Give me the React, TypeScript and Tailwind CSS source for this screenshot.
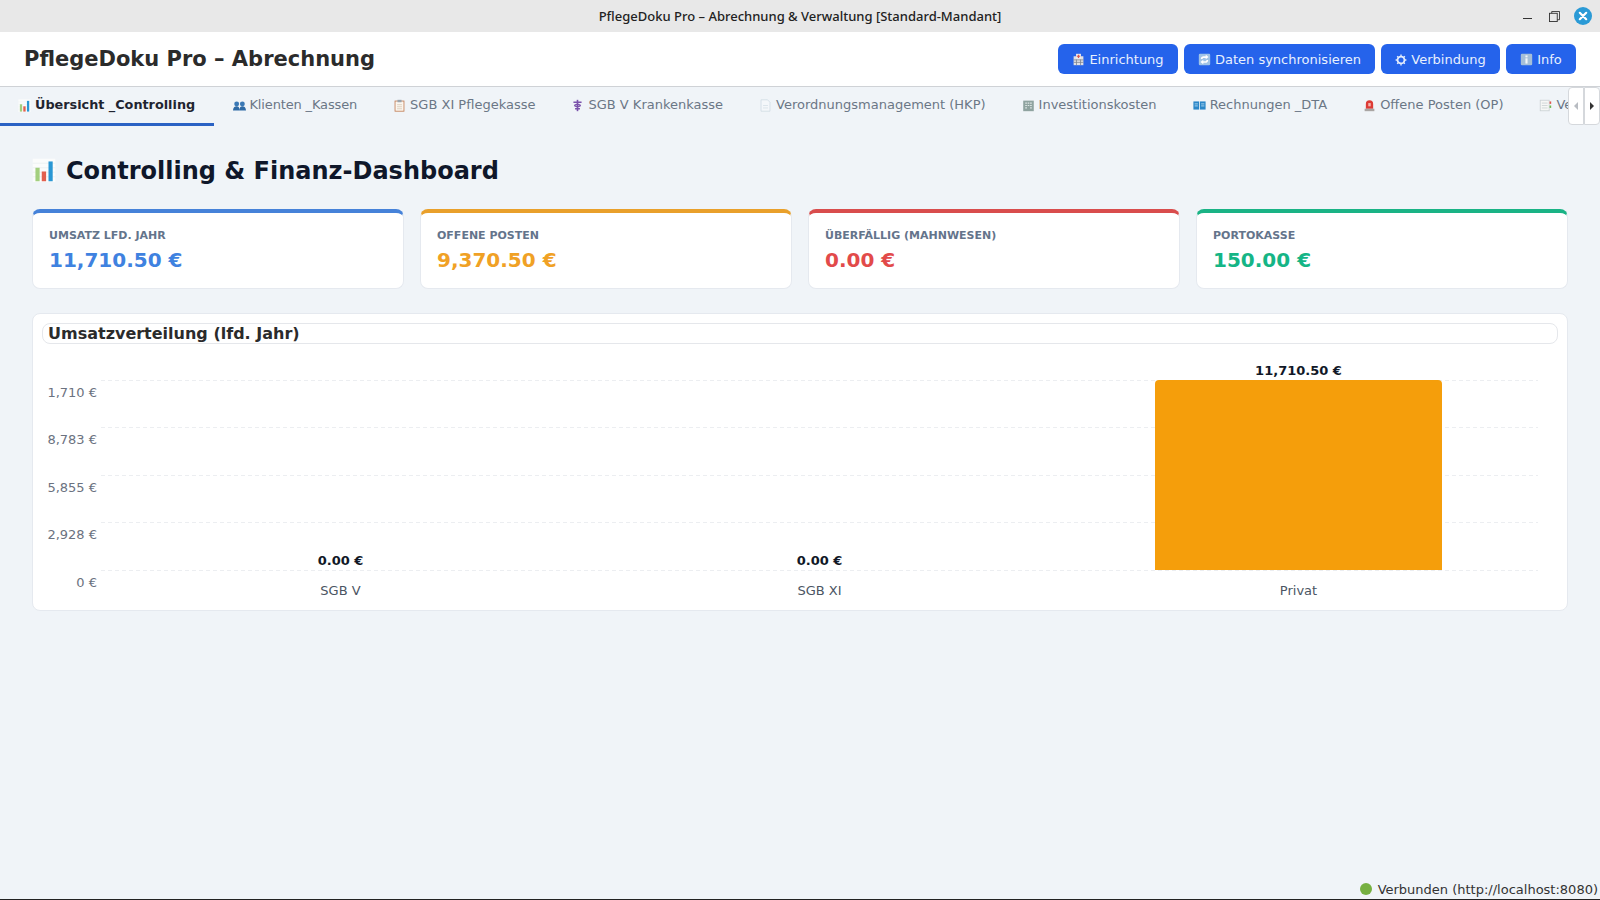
import React from 'react';

const sans = 'font-["DejaVu_Sans",sans-serif]';

function BarsIcon({ className }: { className?: string }) {
  return (
    <svg viewBox="0 0 16 16" className={className}>
      <rect x="0.5" y="0.5" width="15" height="15.500" fill="#fbfcfc" />
      <path d="M0.500 3.500h15M0.500 6.500h15M0.500 9.500h15M0.500 12.500h15" stroke="#e9edef" strokeWidth="0.500" />
      <rect x="2.300" y="6.500" width="2.800" height="9" fill="#a3cf7f" />
      <rect x="6.500" y="9" width="2.900" height="6.500" fill="#e2604f" />
      <rect x="11" y="2.300" width="2.800" height="13.200" fill="#2a97d4" />
    </svg>
  );
}

function PeopleIcon() {
  return (
    <svg viewBox="0 0 16 16" className="w-[13px] h-[13px]">
      <circle cx="4.500" cy="6" r="3" fill="#3a78b5" />
      <circle cx="11.500" cy="6" r="3" fill="#3a78b5" />
      <path d="M0 14c0-3 2-5 4.500-5S8 11 8 14zM8 14c0-3 1-5 3.500-5S16 11 16 14z" fill="#2f6aa5" />
    </svg>
  );
}

function ClipboardIcon() {
  return (
    <svg viewBox="0 0 16 16" className="w-[13px] h-[13px]">
      <rect x="2.500" y="2.500" width="11" height="12.500" fill="#fbf6ef" stroke="#c07a50" />
      <rect x="5.500" y="1" width="5" height="3" fill="#9aa5ae" />
      <path d="M5 7h6M5 9.500h6M5 12h6" stroke="#d8c9b8" />
    </svg>
  );
}

function StaffIcon() {
  return (
    <svg viewBox="0 0 16 16" className="w-[13px] h-[13px]">
      <path d="M8 1v14" stroke="#7b52ab" strokeWidth="2" />
      <path d="M3 4h10M4 8c3-2 5-2 8 0M4 8c3 2 5 2 8 0M5 12h6" stroke="#7b52ab" strokeWidth="1.600" fill="none" />
    </svg>
  );
}

function DocIcon() {
  return (
    <svg viewBox="0 0 16 16" className="w-[13px] h-[13px]">
      <path d="M2.500 1h8l3 3v11h-11z" fill="#f4f7fa" stroke="#cfdbe4" />
      <path d="M5 8h6M5 11h6" stroke="#d5e0e8" />
    </svg>
  );
}

function OfficeIcon() {
  return (
    <svg viewBox="0 0 16 16" className="w-[13px] h-[13px]">
      <rect x="1.500" y="2" width="13" height="13" fill="#8fa3a0" />
      <path d="M4 5h2M7 5h2M10 5h2M4 8h2M7 8h2M10 8h2M4 11h2M10 11h2" stroke="#dfe7e6" strokeWidth="1.400" />
    </svg>
  );
}

function BookIcon() {
  return (
    <svg viewBox="0 0 16 16" className="w-[13px] h-[13px]">
      <rect x="0.500" y="3" width="7" height="10" fill="#2a86c8" />
      <rect x="8.500" y="3" width="7" height="10" fill="#2a86c8" />
      <path d="M2 6h4M2 8.500h4M10 6h4M10 8.500h4" stroke="#bfe0f4" />
    </svg>
  );
}

function SirenIcon() {
  return (
    <svg viewBox="0 0 16 16" className="w-[13px] h-[13px]">
      <path d="M3.500 12V6a4.500 4.500 0 0 1 9 0v6z" fill="#dd3b36" />
      <rect x="6.500" y="5" width="3" height="4" fill="#f7b5ae" />
      <rect x="2" y="12" width="12" height="3" fill="#a9a5a3" />
    </svg>
  );
}

function LedgerIcon() {
  return (
    <svg viewBox="0 0 16 16" className="w-[13px] h-[13px]">
      <rect x="1.500" y="1.500" width="11" height="13" fill="#f6f7f5" stroke="#c9d0d3" />
      <path d="M3.500 5h7M3.500 8h7M3.500 11h7" stroke="#c9d0d3" />
      <rect x="13" y="3" width="2" height="3" fill="#e0574c" />
      <rect x="13" y="8" width="2" height="3" fill="#6fb74f" />
    </svg>
  );
}

function HospitalIcon() {
  return (
    <svg viewBox="0 0 16 16" className="w-[13px] h-[13px] shrink-0">
      <rect x="2" y="4" width="12" height="11" fill="#dfe0e6" />
      <rect x="5" y="1" width="6" height="6" fill="#eeeaea" />
      <path d="M7.200 2h1.600v1.300h1.300v1.400H8.800V6H7.200V4.700H5.900V3.300h1.300z" fill="#d7564e" />
      <path d="M2 8.500h12M2 11.500h12M5.500 8v7M10.500 8v7" stroke="#7f8590" />
    </svg>
  );
}

function SyncIcon() {
  return (
    <svg viewBox="0 0 16 16" className="w-[13px] h-[13px] shrink-0">
      <rect x="1" y="1" width="14" height="14" rx="1.500" fill="#9fc3e6" />
      <path d="M3.500 7.500c0-2.300 1.200-3.500 3.500-3.500h2.500V2.300L13 5l-3.500 2.700V6H7c-.9 0-1.400.5-1.400 1.500zM12.500 8.500c0 2.300-1.200 3.500-3.500 3.500H6.500v1.700L3 11l3.500-2.700V10H9c.9 0 1.400-.5 1.400-1.500z" fill="#fff" />
    </svg>
  );
}

function GearIcon() {
  return (
    <svg viewBox="0 0 16 16" className="w-[12px] h-[12px] shrink-0">
      <circle cx="8" cy="8" r="4.600" fill="none" stroke="#e3ecfc" strokeWidth="2.400" />
      <path d="M8 .8v2.400M8 12.800v2.400M.8 8h2.400M12.800 8h2.400M2.900 2.900l1.700 1.700M11.400 11.400l1.700 1.700M2.900 13.100l1.700-1.700M11.400 4.600l1.700-1.700" stroke="#e3ecfc" strokeWidth="1.800" />
    </svg>
  );
}

function InfoIcon() {
  return (
    <svg viewBox="0 0 16 16" className="w-[13px] h-[13px] shrink-0">
      <rect x="1" y="1" width="14" height="14" rx="1.500" fill="#a5bfd8" />
      <rect x="6.700" y="3" width="2.600" height="2.400" fill="#f2f6fa" />
      <rect x="6.700" y="6.500" width="2.600" height="6.500" fill="#f2f6fa" />
    </svg>
  );
}

const buttons = [
  { label: 'Einrichtung', icon: <HospitalIcon />, width: 'w-[120px]' },
  { label: 'Daten synchronisieren', icon: <SyncIcon />, width: 'w-[191px]' },
  { label: 'Verbindung', icon: <GearIcon />, width: 'w-[119px]' },
  { label: 'Info', icon: <InfoIcon />, width: 'w-[70px]' },
];

const tabs = [
  { label: 'Klienten _Kassen', icon: <PeopleIcon />, tracking: 'tracking-[-0.15px]' },
  { label: 'SGB XI Pflegekasse', icon: <ClipboardIcon />, tracking: '' },
  { label: 'SGB V Krankenkasse', icon: <StaffIcon />, tracking: '' },
  { label: 'Verordnungsmanagement (HKP)', icon: <DocIcon />, tracking: '' },
  { label: 'Investitionskosten', icon: <OfficeIcon />, tracking: '' },
  { label: 'Rechnungen _DTA', icon: <BookIcon />, tracking: '' },
  { label: 'Offene Posten (OP)', icon: <SirenIcon />, tracking: '' },
  { label: 'Ve', icon: <LedgerIcon />, tracking: '' },
];

const cards = [
  { label: 'UMSATZ LFD. JAHR', value: '11,710.50 €', border: 'border-t-[#4682d9]', text: 'text-[#3f82e0]' },
  { label: 'OFFENE POSTEN', value: '9,370.50 €', border: 'border-t-[#e9a02b]', text: 'text-[#f0a125]' },
  { label: 'ÜBERFÄLLIG (MAHNWESEN)', value: '0.00 €', border: 'border-t-[#d94d4d]', text: 'text-[#e24a4a]' },
  { label: 'PORTOKASSE', value: '150.00 €', border: 'border-t-[#1ab385]', text: 'text-[#15b586]' },
];

const gridY = [0, 47, 95, 142, 190];
const axis = ['1,710 €', '8,783 €', '5,855 €', '2,928 €', '0 €'];
const slots = [
  { label: 'SGB V', value: '0.00 €', x: 298.500 },
  { label: 'SGB XI', value: '0.00 €', x: 777.500 },
  { label: 'Privat', value: '11,710.50 €', x: 1256.500 },
];

function RevenueChart() {
  return (
    <svg viewBox="0 0 1516 259" className="w-[1516px] h-[259px] block" fontFamily="DejaVu Sans, sans-serif">
      <g transform="translate(0 36)">
        {gridY.map((y, i) => (
          <g key={i}>
            <line x1="59" x2="1496" y1={y + 0.5} y2={y + 0.5} stroke="#eceef1" strokeDasharray="4 3" />
            <text x="55" y={y + 17} textAnchor="end" fontSize="13" fill="#6b7280">{axis[i]}</text>
          </g>
        ))}
        <path d="M1113 190V4a4 4 0 0 1 4-4h279a4 4 0 0 1 4 4v186z" fill="#f59e0b" />
        {slots.map((s, i) => (
          <g key={s.label}>
            <text x={s.x} y={i === 2 ? -5 : 185} textAnchor="middle" fontSize="13" fontWeight="700" fill="#111827">{s.value}</text>
            <text x={s.x} y="215" textAnchor="middle" fontSize="13" fill="#4b5563">{s.label}</text>
          </g>
        ))}
      </g>
    </svg>
  );
}

export default function App() {
  return (
    <div className={`relative w-[1600px] h-[900px] overflow-hidden bg-[#f0f4f8] ${sans}`}>
      {/* window title bar */}
      <div className="relative h-8 bg-[#e8e8e8] flex items-center justify-center pt-px">
        <span className='font-["Noto_Sans",sans-serif] text-[13px] font-medium text-[#222]'>
          PflegeDoku Pro – Abrechnung &amp; Verwaltung [Standard-Mandant]
        </span>
        <div className="absolute right-[8px] top-0 h-8 flex items-center">
          <div className="w-[9px] h-px bg-[#333] mt-[4px] mr-[17px]" />
          <svg viewBox="0 0 12 12" className="w-[11px] h-[11px] mr-[14px]">
            <rect x="0.500" y="2.500" width="8.500" height="9" fill="none" stroke="#333" />
            <path d="M3 2.500V.500h8.500v9H9" fill="none" stroke="#333" />
          </svg>
          <svg viewBox="0 0 18 18" className="w-[18px] h-[18px]">
            <circle cx="9" cy="9" r="9" fill="#2a9ad6" />
            <path d="M5.800 5.800l6.400 6.400M12.200 5.800l-6.400 6.400" stroke="#fff" strokeWidth="2.200" strokeLinecap="round" />
          </svg>
        </div>
      </div>

      {/* app header */}
      <header className="h-[55px] bg-white border-b border-[#cfd2d6] flex items-center justify-between px-6">
        <h1 className="text-[21px] font-bold text-[#2b2b2b] pt-[2px]">PflegeDoku Pro – Abrechnung</h1>
        <div className="flex gap-[6px]">
          {buttons.map((b) => (
            <button key={b.label} className={`${b.width} h-[30px] rounded-md bg-[#2563eb] text-[#e8f0fe] text-[13px] flex items-center justify-center gap-[4px] pt-px`}>
              {b.icon}
              {b.label}
            </button>
          ))}
        </div>
      </header>

      {/* tab strip */}
      <div className="relative h-[40px] flex overflow-hidden">
        <div className="h-[39px] w-[214px] shrink-0 border-b-[3px] border-[#2b62c4] flex items-center pl-[18px] gap-[4px] text-[12.800px] font-bold text-[#1f2430] pb-0">
          <BarsIcon className="w-[13px] h-[13px]" />
          Übersicht _Controlling
        </div>
        {tabs.map((t) => (
          <div key={t.label} className={`h-[39px] shrink-0 flex items-center pl-[18.500px] pr-[17.500px] gap-[4px] text-[13px] text-[#6b7786] pb-[3px] ${t.tracking}`}>
            {t.icon}
            {t.label}
          </div>
        ))}
        <div className="absolute right-0 top-0 h-[38px] flex">
          <div className="w-[16px] bg-white border border-[#d5d8dc] rounded-l-sm flex items-center justify-center">
            <div className="w-0 h-0 border-y-[4px] border-y-transparent border-r-[4px] border-r-[#b8bcc2]" />
          </div>
          <div className="w-[16px] bg-white border border-[#d5d8dc] rounded-r-sm flex items-center justify-center">
            <div className="w-0 h-0 border-y-[4px] border-y-transparent border-l-[4px] border-l-[#333]" />
          </div>
        </div>
      </div>

      {/* dashboard */}
      <main className="px-8 pt-[27px]">
        <div className="flex items-center gap-[10px] h-[32px]">
          <BarsIcon className="w-[24px] h-[24px]" />
          <h2 className="text-[24px] font-bold text-[#0f172a] mt-[2px]">Controlling &amp; Finanz-Dashboard</h2>
        </div>

        <div className="grid grid-cols-4 gap-4 mt-[23px]">
          {cards.map((c) => (
            <div key={c.label} className={`h-[80px] bg-white rounded-lg border border-[#e5e9ef] border-t-4 ${c.border} px-4 pt-[15px]`}>
              <div className="text-[11px] font-bold text-[#64748b] leading-[16px]">{c.label}</div>
              <div className={`text-[20px] font-bold ${c.text} leading-[30px] mt-px`}>{c.value}</div>
            </div>
          ))}
        </div>

        <section className="mt-[24px] h-[298px] bg-white rounded-lg border border-[#e5e9ef] px-[9px] pt-[9px]">
          <div className="h-[21px] rounded-lg border border-[#e5e7eb] flex items-center px-[5px] pt-[1px] text-[16px] font-bold text-[#2b2b2b]">
            Umsatzverteilung (lfd. Jahr)
          </div>
          <RevenueChart />
        </section>
      </main>

      {/* connection status */}
      <div className="absolute right-[2px] bottom-[1px] flex items-center gap-[6px] text-[13px] text-[#333]">
        <span className="w-[12px] h-[12px] rounded-full bg-[#76b041]" />
        Verbunden (http://localhost:8080)
      </div>
      <div className="absolute left-0 right-0 bottom-0 h-px bg-[#222]" />
    </div>
  );
}
